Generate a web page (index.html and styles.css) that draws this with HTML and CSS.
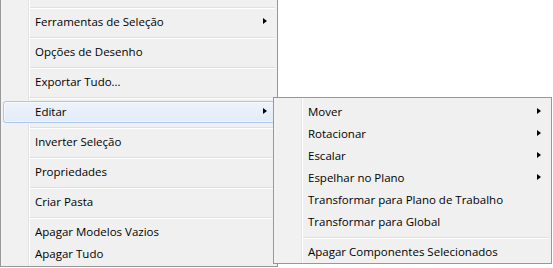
FILE: index.html
```html
<!DOCTYPE html>
<html>
<head>
<meta charset="utf-8">
<link rel="stylesheet" href="styles.css">
</head>
<body>
<div class="menu main">
  <div class="sep"></div>
  <div class="item has-sub">Ferramentas de Seleção</div>
  <div class="sep"></div>
  <div class="item">Opções de Desenho</div>
  <div class="sep"></div>
  <div class="item">Exportar Tudo...</div>
  <div class="sep"></div>
  <div class="item has-sub active">Editar</div>
  <div class="sep"></div>
  <div class="item">Inverter Seleção</div>
  <div class="sep"></div>
  <div class="item">Propriedades</div>
  <div class="sep"></div>
  <div class="item">Criar Pasta</div>
  <div class="sep"></div>
  <div class="item">Apagar Modelos Vazios</div>
  <div class="item">Apagar Tudo</div>
</div>
<div class="menu flyout">
  <div class="item has-sub">Mover</div>
  <div class="item has-sub">Rotacionar</div>
  <div class="item has-sub">Escalar</div>
  <div class="item has-sub">Espelhar no Plano</div>
  <div class="item">Transformar para Plano de Trabalho</div>
  <div class="item">Transformar para Global</div>
  <div class="sep"></div>
  <div class="item">Apagar Componentes Selecionados</div>
</div>
</body>
</html>
```

FILE: styles.css
```css
html, body {
  margin: 0;
  padding: 0;
  background: #ffffff;
}
body {
  position: relative;
  width: 553px;
  height: 268px;
  overflow: hidden;
  font-family: "Open Sans", "Noto Sans", sans-serif;
  font-size: 11.5px;
  color: #000;
}
.menu {
  box-sizing: border-box;
  border: 1px solid #979797;
  background:
    linear-gradient(to right, #f5f5f5 0, #f1f1f1 2px, #f1f1f1 27px, #e2e3e3 27px, #e2e3e3 28px, #ffffff 28px, #ffffff 29px, #f0f0f0 29px);
  background-origin: padding-box;
}
.main {
  width: 278px;
  border-top: none;
  padding: 3px 2px 1px 2px;
}
.flyout {
  position: absolute;
  left: 273px;
  top: 97px;
  width: 279px;
  padding: 3px 2px 0 2px;
}
.item {
  position: relative;
  box-sizing: border-box;
  height: 22px;
  line-height: 20px;
  padding-left: 31px;
  white-space: nowrap;
  border: 1px solid transparent;
  border-radius: 3px;
}
.has-sub::after {
  content: "";
  position: absolute;
  right: 7px;
  top: 6px;
  width: 0;
  height: 0;
  border-left: 4px solid #000;
  border-top: 3.5px solid transparent;
  border-bottom: 3.5px solid transparent;
}
.active {
  border-color: #a9c7ec;
  background: linear-gradient(to bottom, #edf3fb, #e2ebf7);
  box-shadow: inset 0 0 0 1px rgba(255, 255, 255, 0.55);
}
.sep {
  height: 0;
  border-top: 1px solid #e0e0e0;
  border-bottom: 1px solid #ffffff;
  margin: 4px 0 2px 27px;
}
```
